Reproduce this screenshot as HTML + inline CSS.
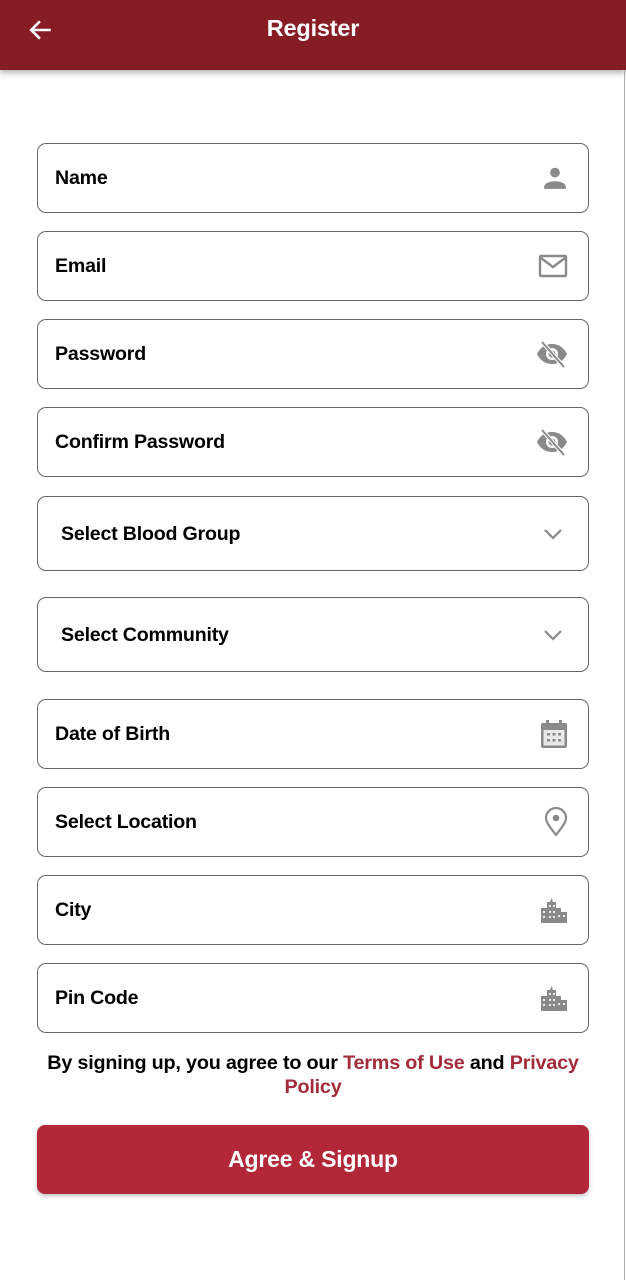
<!DOCTYPE html>
<html><head><meta charset="utf-8"><style>
*{margin:0;padding:0;box-sizing:border-box}
body{width:626px;height:1280px;background:#fff;font-family:"Liberation Sans",Arial,sans-serif;position:relative;overflow:hidden}
.hdr{position:absolute;left:0;top:0;width:626px;height:70px;background:#861d25;box-shadow:0 3px 6px rgba(0,0,0,.3)}
.hdr h1{position:absolute;left:0;right:0;top:15px;text-align:center;color:#fff;font-size:23.5px;font-weight:bold;letter-spacing:-0.2px}
.vl{position:absolute;left:624px;top:70px;width:1px;height:1210px;background:#aaa}
.f{position:absolute;left:37px;width:552px;border:1.8px solid #666;border-radius:9px;background:#fff}
.f span{position:absolute;left:17px;top:50%;transform:translateY(-48%);font-size:19.6px;font-weight:bold;color:#000;letter-spacing:-0.2px}
.f svg{position:absolute;right:20px;top:50%;transform:translateY(-50%)}
.terms{position:absolute;left:36px;width:554px;top:1051px;text-align:center;font-size:19.8px;font-weight:bold;line-height:24px;letter-spacing:-0.2px}
.terms b{color:#a32b3b}
.btn{position:absolute;left:37px;top:1125px;width:552px;height:69px;background:#b32838;border-radius:8px;box-shadow:0 2px 4px rgba(0,0,0,.25);color:#fff;font-size:23px;font-weight:bold;text-align:center;line-height:69px;letter-spacing:-0.2px}
</style></head><body>
<div class="hdr">
<svg style="position:absolute;left:28px;top:17px" width="26" height="26" viewBox="0 0 24 24"><path d="M21 12H4M11 4l-8 8 8 8" stroke="#fff" stroke-width="2.4" fill="none"/></svg>
<h1>Register</h1></div>
<div class="vl"></div>

<div class="f" style="top:143px;height:70px"><span>Name</span>
<svg width="26" height="26" viewBox="0 0 24 24"><circle cx="12" cy="7" r="4.5" fill="#8a8a8a"/><path d="M2 22v-2c0-3 5-5 10-5s10 2 10 5v2z" fill="#8a8a8a"/></svg></div>

<div class="f" style="top:231px;height:70px"><span>Email</span>
<svg width="30" height="26" viewBox="0 0 30 26"><rect x="2" y="3" width="26" height="20" rx="1" fill="none" stroke="#8a8a8a" stroke-width="2.4"/><path d="M3 5l12 9 12-9" fill="none" stroke="#8a8a8a" stroke-width="2.4"/></svg></div>

<div class="f" style="top:319px;height:70px"><span>Password</span>
<svg width="32" height="30" viewBox="0 0 32 30"><path d="M1 15C5 7 11 5 16 5s11 2 15 10c-4 8-10 10-15 10S5 23 1 15z" fill="#8a8a8a"/><circle cx="16" cy="15" r="6" fill="#fff"/><circle cx="16" cy="15" r="3.5" fill="#8a8a8a"/><path d="M6 3l22 25" stroke="#fff" stroke-width="4"/><path d="M6 3l22 25" stroke="#8a8a8a" stroke-width="2"/></svg></div>

<div class="f" style="top:407px;height:70px"><span>Confirm Password</span>
<svg width="32" height="30" viewBox="0 0 32 30"><path d="M1 15C5 7 11 5 16 5s11 2 15 10c-4 8-10 10-15 10S5 23 1 15z" fill="#8a8a8a"/><circle cx="16" cy="15" r="6" fill="#fff"/><circle cx="16" cy="15" r="3.5" fill="#8a8a8a"/><path d="M6 3l22 25" stroke="#fff" stroke-width="4"/><path d="M6 3l22 25" stroke="#8a8a8a" stroke-width="2"/></svg></div>

<div class="f" style="top:496px;height:75px"><span style="left:23px">Select Blood Group</span>
<svg width="22" height="14" viewBox="0 0 22 14" style="right:24px"><path d="M3 3l8 8 8-8" fill="none" stroke="#8a8a8a" stroke-width="2.2"/></svg></div>

<div class="f" style="top:597px;height:75px"><span style="left:23px">Select Community</span>
<svg width="22" height="14" viewBox="0 0 22 14" style="right:24px"><path d="M3 3l8 8 8-8" fill="none" stroke="#8a8a8a" stroke-width="2.2"/></svg></div>

<div class="f" style="top:699px;height:70px"><span>Date of Birth</span>
<svg width="28" height="30" viewBox="0 0 28 30"><rect x="1" y="4" width="26" height="25" rx="2" fill="#8a8a8a"/><rect x="3.5" y="11" width="21" height="15.5" fill="#e8e8e8"/><rect x="6" y="1" width="3" height="6" fill="#8a8a8a"/><rect x="19" y="1" width="3" height="6" fill="#8a8a8a"/><g fill="#8a8a8a"><rect x="7" y="14" width="3" height="2.5"/><rect x="12.5" y="14" width="3" height="2.5"/><rect x="18" y="14" width="3" height="2.5"/><rect x="7" y="20" width="3" height="2.5"/><rect x="12.5" y="20" width="3" height="2.5"/><rect x="18" y="20" width="3" height="2.5"/></g></svg></div>

<div class="f" style="top:787px;height:70px"><span>Select Location</span>
<svg width="24" height="30" viewBox="0 0 24 30"><path d="M12 28C5 19 2 15 2 11a10 10 0 0 1 20 0c0 4-3 8-10 17z" fill="none" stroke="#8a8a8a" stroke-width="2.2"/><circle cx="12" cy="11" r="3.3" fill="#8a8a8a"/></svg></div>

<div class="f" style="top:875px;height:70px"><span>City</span>
<svg width="28" height="28" viewBox="0 0 28 28"><path d="M1 27V12h6V6h3l1.5-4 1.5 4h3v6h5v4h6v11z" fill="#8a8a8a"/><g fill="#e8e8e8"><rect x="3" y="15" width="2" height="2"/><rect x="3" y="20" width="2" height="2"/><rect x="9" y="9" width="2" height="2"/><rect x="13" y="9" width="2" height="2"/><rect x="9" y="15" width="2" height="2"/><rect x="13" y="15" width="2" height="2"/><rect x="9" y="20" width="2" height="2"/><rect x="13" y="20" width="2" height="2"/><rect x="18" y="19" width="2" height="2"/><rect x="23" y="19" width="2" height="2"/></g></svg></div>

<div class="f" style="top:963px;height:70px"><span>Pin Code</span>
<svg width="28" height="28" viewBox="0 0 28 28"><path d="M1 27V12h6V6h3l1.5-4 1.5 4h3v6h5v4h6v11z" fill="#8a8a8a"/><g fill="#e8e8e8"><rect x="3" y="15" width="2" height="2"/><rect x="3" y="20" width="2" height="2"/><rect x="9" y="9" width="2" height="2"/><rect x="13" y="9" width="2" height="2"/><rect x="9" y="15" width="2" height="2"/><rect x="13" y="15" width="2" height="2"/><rect x="9" y="20" width="2" height="2"/><rect x="13" y="20" width="2" height="2"/><rect x="18" y="19" width="2" height="2"/><rect x="23" y="19" width="2" height="2"/></g></svg></div>

<div class="terms">By signing up, you agree to our <b>Terms of Use</b> and <b>Privacy Policy</b></div>
<div class="btn">Agree &amp; Signup</div>
</body></html>
